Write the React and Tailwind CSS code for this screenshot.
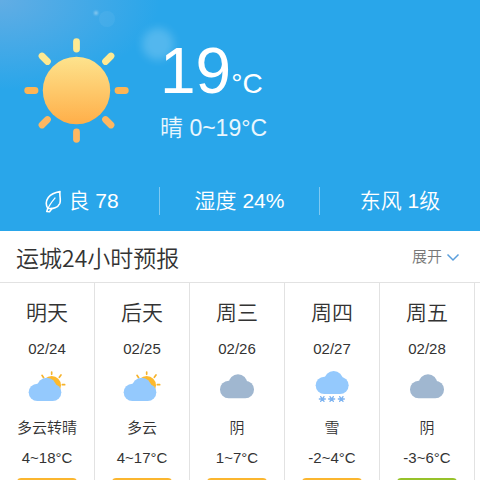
const days = [
  { name: '明天', date: '02/24', icon: 'partly', text: '多云转晴', temp: '4~18°C', level: 'good' },
  { name: '后天', date: '02/25', icon: 'partly', text: '多云', temp: '4~17°C', level: 'good' },
  { name: '周三', date: '02/26', icon: 'overcast', text: '阴', temp: '1~7°C', level: 'good' },
  { name: '周四', date: '02/27', icon: 'snow', text: '雪', temp: '-2~4°C', level: 'good' },
  { name: '周五', date: '02/28', icon: 'overcast', text: '阴', temp: '-3~6°C', level: 'best' },
];

function SunIcon() {
  return (
    <svg className="size-[106px] shrink-0" viewBox="0 0 106 106" aria-hidden="true">
      <defs>
        <linearGradient id="sun" gradientUnits="userSpaceOnUse" x1="0" y1="19" x2="0" y2="87">
          <stop offset="0" stopColor="#fde38d" />
          <stop offset="1" stopColor="#ffae48" />
        </linearGradient>
      </defs>
      <circle cx="52.500" cy="52.500" r="33.700" fill="url(#sun)" />
      <g strokeWidth="6.800" strokeLinecap="round">
        <path d="M52.500 3.700V11" stroke="#fde992" />
        <path d="M18 18L23.500 23.500M87 18L81.500 23.500" stroke="#fde992" />
        <path d="M3.700 52.500H11M101.300 52.500H94" stroke="#feb555" />
        <path d="M18 87L23.500 81.500M87 87L81.500 81.500" stroke="#feb761" />
        <path d="M52.500 101.300V94" stroke="#feb761" />
      </g>
    </svg>
  );
}

function LeafIcon() {
  return (
    <svg className="mt-0.5 h-6 w-[18px]" viewBox="0 0 18 24" fill="none" stroke="#fff" strokeWidth="1.600" strokeLinecap="round" strokeLinejoin="round" aria-hidden="true">
      <path d="M16 1.500C11.500 2.300 7 4 4.300 7.500C1.800 11 1.500 14.500 3.800 18.300C9 19.300 14 17.500 15.800 13.500C17.200 10 15.300 6 16 1.500Z" />
      <path d="M11 8C8.500 11 5.500 14.500 4.200 18.300" strokeWidth="1.200" />
      <path d="M3.800 18.300L2.800 21.500L5.500 21.800L7.800 18.700" />
    </svg>
  );
}

function WeatherIcon({ type }) {
  if (type === 'partly') {
    return (
      <svg className="h-[33px] w-10" viewBox="0 0 120 99" aria-hidden="true">
        <circle cx="74" cy="43" r="28" fill="#fdb92c" />
        <path d="M74 3V10M45 13L50 20M102 12L97 19M106 41H113" stroke="#f6b32c" strokeWidth="5" strokeLinecap="round" />
        <circle cx="59" cy="49" r="29" fill="#94c9fd" />
        <rect x="5" y="38" width="98" height="52" rx="26" fill="#94c9fd" />
      </svg>
    );
  }
  if (type === 'snow') {
    return (
      <svg className="h-[33px] w-10" viewBox="0 0 120 99" aria-hidden="true">
        <circle cx="65" cy="28" r="28" fill="#94c9fd" />
        <rect x="11" y="17" width="99" height="52" rx="26" fill="#94c9fd" />
        <path
          d="M22 84H40M26 77L36 91M36 77L26 91M50 84H68M54 77L64 91M64 77L54 91M79 84H97M83 77L93 91M93 77L83 91"
          stroke="#7db3f0"
          strokeWidth="4"
          strokeLinecap="round"
        />
      </svg>
    );
  }
  return (
    <svg className="h-[33px] w-10" viewBox="0 0 120 99" aria-hidden="true">
      <circle cx="63" cy="38" r="28" fill="#a0b7d0" />
      <rect x="9" y="29" width="102" height="53" rx="26" fill="#a0b7d0" />
    </svg>
  );
}

export default function App() {
  return (
    <div className="flex h-screen flex-col overflow-hidden bg-white font-['Liberation_Sans','Noto_Sans_CJK_SC',sans-serif] font-[350] text-[#333]">
      <section className="relative shrink-0 overflow-hidden bg-[#29a6ea] bg-[radial-gradient(ellipse_160px_90px_at_0_0,#62ade4,transparent)] text-white">
        <div className="absolute left-[142px] top-[28px] size-8 rounded-full bg-white/20 blur-[4px]" />
        <div className="absolute left-[94px] top-[11px] size-1 rounded-full bg-white/40 blur-[1px]" />
        <div className="absolute left-[99px] top-[11px] size-4 rounded-full bg-white/5" />
        <div className="relative flex items-start gap-[30px] px-6 pt-[38px]">
          <SunIcon />
          <div>
            <p className="flex items-baseline text-[64px] leading-[66px]">
              19<span className="text-[28px] leading-8">°C</span>
            </p>
            <p className="pt-2.5 text-[23px] leading-7 text-white/90">晴 0~19°C</p>
          </div>
        </div>
        <ul className="relative grid grid-cols-3 divide-x divide-white/40 pb-4 pt-[43px] text-[21px] leading-7">
          <li className="flex items-center justify-center gap-1.5 pl-1">
            <LeafIcon />
            良 78
          </li>
          <li className="text-center">湿度 24%</li>
          <li className="text-center">东风 1级</li>
        </ul>
      </section>

      <header className="flex h-[52px] shrink-0 items-center justify-between border-b border-[#e2e2e2] pl-4 pr-5">
        <h1 className="font-['Noto_Sans_CJK_SC',sans-serif] text-[23px] font-[350] leading-8">运城24小时预报</h1>
        <button type="button" className="flex items-center gap-1 text-[15px] leading-6 text-[#777]">
          展开
          <svg className="h-4 w-[14px]" viewBox="0 0 14 16" fill="none" stroke="#5a9fdc" strokeWidth="1.500" aria-hidden="true">
            <path d="M1.500 5.500L7 11L12.500 5.500" />
          </svg>
        </button>
      </header>

      <ol className="flex overflow-hidden">
        {days.map((day) => (
          <li key={day.date} className="flex w-[95px] shrink-0 flex-col items-center border-r border-[#e2e2e2] pb-4 pt-3.5 text-[15px] leading-5">
            <h2 className="text-[21px] font-[350] leading-8">{day.name}</h2>
            <p className="pt-2.5">{day.date}</p>
            <div className="pt-3">
              <WeatherIcon type={day.icon} />
            </div>
            <p className="pt-3.5">{day.text}</p>
            <p className="pt-2.5">{day.temp}</p>
            <div className={`mt-2.5 h-5 w-[60px] shrink-0 rounded ${day.level === 'good' ? 'bg-[#fbb62f]' : 'bg-[#97c22a]'}`} />
          </li>
        ))}
      </ol>
    </div>
  );
}
